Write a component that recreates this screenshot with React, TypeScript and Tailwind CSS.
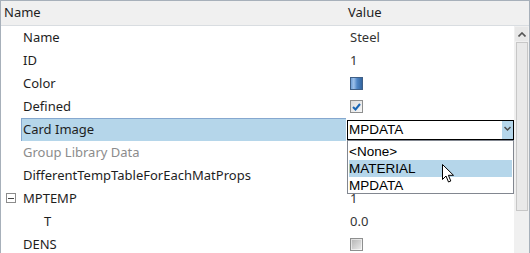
import React from "react";

const font = { fontFamily: '"Noto Sans", "Liberation Sans", Arial, sans-serif' };
const listFont = { fontFamily: '"Liberation Sans", Arial, sans-serif' };

function Swatch() {
  return (
    <div className="w-[13px] h-[13px] border border-[#3f5f86] bg-[linear-gradient(90deg,#6f9fd6_0%,#9cc0ea_25%,#4f86c6_55%,#33659f_100%)]" />
  );
}

function Check({ checked }: { checked: boolean }) {
  return (
    <div className="w-[13px] h-[13px] border border-[#8e8f8f] bg-[linear-gradient(135deg,#dcdcdc,#f8f8f8)] flex items-center justify-center">
      {checked ? (
        <svg width="9" height="8" viewBox="0 0 9 8">
          <path d="M1 4 L3.5 6.5 L8 1" stroke="#1a66b5" strokeWidth="2" fill="none" />
        </svg>
      ) : (
        <div className="w-[9px] h-[9px] bg-[linear-gradient(135deg,#b8b8b8,#e8e8e8)]" />
      )}
    </div>
  );
}

type Row = {
  name: string;
  indent: number;
  value?: React.ReactNode;
  gray?: boolean;
  selected?: boolean;
  expander?: boolean;
};

const rows: Row[] = [
  { name: "Name", indent: 22, value: <span className="text-[#333]">Steel</span> },
  { name: "ID", indent: 22, value: <span className="text-[#333]">1</span> },
  { name: "Color", indent: 22, value: <Swatch /> },
  { name: "Defined", indent: 22, value: <Check checked /> },
  { name: "Card Image", indent: 22, selected: true },
  { name: "Group Library Data", indent: 22, gray: true },
  { name: "DifferentTempTableForEachMatProps", indent: 22 },
  { name: "MPTEMP", indent: 22, expander: true, value: <span className="text-[#333]">1</span> },
  { name: "T", indent: 43, value: <span className="text-[#333]">0.0</span> },
  { name: "DENS", indent: 22, value: <Check checked={false} /> },
];

export default function App() {
  return (
    <div
      className="relative w-[530px] h-[253px] overflow-hidden bg-white border-t border-l border-r border-[#a7b0ba] text-[13px] text-[#1e1e1e]"
      style={font}
    >
      {/* header */}
      <div className="flex h-[25px] bg-[#f0f0f0] border-b border-[#d9dde1] items-center">
        <div className="w-[347px] pl-[3px]">Name</div>
        <div>Value</div>
      </div>
      <div className="flex">
        <div className="w-[513px]">
          {rows.map((r, i) => (
            <div key={i} className="flex h-[23px] items-center">
              <div className="w-[345px] h-full relative flex items-center">
                {r.expander && (
                  <div className="absolute left-[5px] top-[6px] w-[10px] h-[10px] border border-[#8c8c8c] bg-white flex items-center justify-center">
                    <div className="w-[6px] h-px bg-[#444]" />
                  </div>
                )}
                {r.selected ? (
                  <div className="ml-[20px] flex-1 h-full bg-[#b5d6ea] border-l border-t border-[#86a8cf] flex items-center pl-[1px]">
                    {r.name}
                  </div>
                ) : (
                  <div
                    className={r.gray ? "text-[#8c8c8c]" : ""}
                    style={{ paddingLeft: r.indent }}
                  >
                    {r.name}
                  </div>
                )}
              </div>
              <div className="pl-[4px] flex items-center">{r.value}</div>
            </div>
          ))}
        </div>
        {/* scrollbar */}
        <div className="w-[15px] h-[230px] bg-[#f0f0f0] flex flex-col items-center pt-[1px]">
          <div className="w-[13px] h-[14px] flex items-center justify-center bg-[#e8e8e8]">
            <svg width="8" height="5" viewBox="0 0 8 5">
              <path d="M0.5 4.5 L4 1 L7.5 4.5" stroke="#555" strokeWidth="1.6" fill="none" />
            </svg>
          </div>
          <div className="mt-[1px] w-[12px] h-[169px] bg-[#e9e9e9] border border-[#c7c7c7]" />
        </div>
      </div>

      {/* combobox */}
      <div
        className="absolute left-[346px] top-[119px] w-[167px] h-[20px] border border-black bg-white flex items-center text-[13.5px]"
        style={listFont}
      >
        <div className="flex-1 pl-[1px] text-black leading-none">MPDATA</div>
        <div className="w-[11px] h-full bg-[#b5d6ea] flex items-start justify-center pt-[5px]">
          <svg width="7" height="6" viewBox="0 0 7 6">
            <path d="M0.5 1 L3.5 4 L6.5 1" stroke="#4a4a4a" strokeWidth="1.5" fill="none" />
          </svg>
        </div>
      </div>
      {/* list */}
      <div
        className="absolute left-[346px] top-[139px] w-[167px] h-[54px] border border-[#828790] bg-white pt-[2px] px-[1px] text-black leading-none text-[13.5px]"
        style={listFont}
      >
        <div className="h-[17px] flex items-center">&lt;None&gt;</div>
        <div className="h-[17px] flex items-center bg-[#b5d6ea]">MATERIAL</div>
        <div className="h-[17px] flex items-center">MPDATA</div>
      </div>

      {/* cursor */}
      <svg className="absolute left-[441px] top-[163px]" width="13" height="20" viewBox="0 0 13 20">
        <path
          d="M0.5 0.5 L0.5 15.5 L4 12 L6.5 18 L8.8 17 L6.4 11.3 L11.5 11.3 Z"
          fill="white"
          stroke="black"
          strokeWidth="1"
          strokeLinejoin="miter"
        />
      </svg>
    </div>
  );
}
